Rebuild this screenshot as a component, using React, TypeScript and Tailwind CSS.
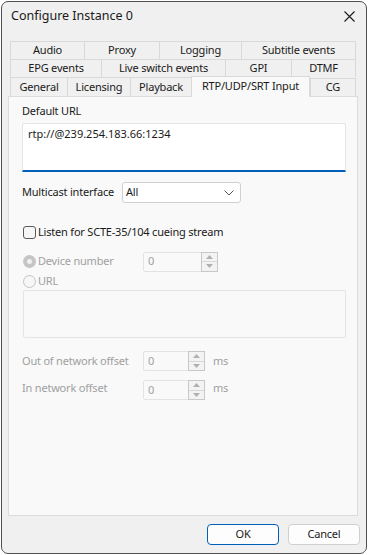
import React from "react";

const F = { fontFamily: '"Noto Sans", "Segoe UI", sans-serif', letterSpacing: "-0.2px" };

function Tab({ w, label, last }: { w: number; label: string; last?: boolean }) {
  return (
    <div
      className={`h-full flex items-center justify-center border-t border-l border-[#d9d9d9] bg-[#f0f0f0] text-[11px] text-[#1a1a1a] ${last ? "border-r" : ""}`}
      style={{ width: w }}
    >
      {label}
    </div>
  );
}

function Spin({ w }: { w: number }) {
  return (
    <div
      className="h-[20px] flex border border-[#e3e3e3] bg-[#f9f9f9] rounded-[2px]"
      style={{ width: w }}
    >
      <div className="flex-1 flex items-center pl-[4px] text-[11px] text-[#a0a0a0]">0</div>
      <div className="w-[17px] flex flex-col bg-[#f3f3f3] border border-[#c8c8c8] -my-px -mr-px">
        <div className="flex-1 flex items-center justify-center border-b border-[#d8d8d8]">
          <svg width="7" height="4" viewBox="0 0 7 4"><path d="M0 4 L3.5 0 L7 4Z" fill="#b0b0b0" /></svg>
        </div>
        <div className="flex-1 flex items-center justify-center">
          <svg width="7" height="4" viewBox="0 0 7 4"><path d="M0 0 L3.5 4 L7 0Z" fill="#b0b0b0" /></svg>
        </div>
      </div>
    </div>
  );
}

export default function App() {
  return (
    <div className="w-[368px] h-[555px] bg-white" style={F}>
      <div className="ml-[1px] pt-[1px]">
        <div className="w-[366px] h-[553px] border border-[#505050] rounded-[7px] bg-[#f0f0f0] flex flex-col overflow-hidden">
          {/* Title bar */}
          <div className="h-[28px] flex items-center justify-between pl-[9px] pr-[11px]">
            <span className="text-[12.5px] text-[#1a1a1a] tracking-normal">Configure Instance 0</span>
            <svg width="11" height="11" viewBox="0 0 11 11">
              <path d="M0.5 0.5 L10.5 10.5 M10.5 0.5 L0.5 10.5" stroke="#1a1a1a" strokeWidth="1.1" />
            </svg>
          </div>
          {/* Tabs */}
          <div className="mt-[11px] pl-[8px] flex flex-col">
            <div className="h-[18px] flex">
              <Tab w={74} label="Audio" />
              <Tab w={75} label="Proxy" />
              <Tab w={82} label="Logging" />
              <Tab w={115} label="Subtitle events" last />
            </div>
            <div className="h-[18px] flex">
              <Tab w={91} label="EPG events" />
              <Tab w={124} label="Live switch events" />
              <Tab w={66} label="GPI" />
              <Tab w={65} label="DTMF" last />
            </div>
            <div className="h-[19px] flex items-end">
              <div className="h-[19px] flex">
                <Tab w={57} label="General" />
                <Tab w={63} label="Licensing" />
                <Tab w={61} label="Playback" />
              </div>
              <div className="relative z-10 h-[21px] w-[119px] -mb-[1px] flex items-start justify-center pt-[1px] border-t border-l border-r border-[#d9d9d9] bg-[#f9f9f9] text-[11px] text-[#1a1a1a]">
                RTP/UDP/SRT Input
              </div>
              <div className="h-[18px] flex">
                <Tab w={46} label="CG" last />
              </div>
            </div>
          </div>
          {/* Panel */}
          <div className="ml-[6px] w-[350px] h-[420px] border border-[#dcdcdc] bg-[#f9f9f9] flex flex-col pl-[13px] text-[11px]">
            <div className="mt-[6px] h-[16px] leading-[16px] text-[#1a1a1a]">Default URL</div>
            <div className="mt-[4px] w-[324px] h-[49px] bg-white border border-[#e5e5e5] border-b-2 border-b-[#005fb8] rounded-t-[3px] pl-[5px] pt-[2px] text-[#1a1a1a] tracking-normal">
              rtp://@239.254.183.66:1234
            </div>
            <div className="mt-[10px] h-[21px] flex items-center">
              <span className="w-[100px] text-[#1a1a1a] whitespace-nowrap">Multicast interface</span>
              <div className="w-[119px] h-[21px] flex items-center justify-between bg-white border border-[#d0d0d0] rounded-[3px] pl-[3px] pr-[6px] text-[#1a1a1a]">
                <span>All</span>
                <svg width="10" height="6" viewBox="0 0 10 6"><path d="M0.5 0.5 L5 5 L9.5 0.5" stroke="#555" strokeWidth="1" fill="none" /></svg>
              </div>
            </div>
            <div className="mt-[21px] h-[16px] flex items-center">
              <div className="w-[13px] h-[13px] ml-[1px] border border-[#5a5a5a] rounded-[3px] bg-[#f6f6f6]" />
              <span className="ml-[2px] text-[#1a1a1a]">Listen for SCTE-35/104 cueing stream</span>
            </div>
            <div className="mt-[11px] h-[21px] flex items-center">
              <div className="w-[121px] flex items-center">
                <div className="w-[13px] h-[13px] ml-[1px] rounded-full bg-[#c5c5c5] flex items-center justify-center">
                  <div className="w-[5px] h-[5px] rounded-full bg-[#f0f0f0]" />
                </div>
                <span className="ml-[2px] text-[#a0a0a0]">Device number</span>
              </div>
              <Spin w={75} />
            </div>
            <div className="h-[18px] flex items-center">
              <div className="w-[13px] h-[13px] ml-[1px] rounded-full border border-[#c5c5c5] bg-[#f6f6f6]" />
              <span className="ml-[2px] text-[#a0a0a0]">URL</span>
            </div>
            <div className="ml-[1px] w-[323px] h-[48px] border border-[#e5e5e5] bg-[#f9f9f9] rounded-[2px]" />
            <div className="mt-[13px] h-[20px] flex items-center">
              <span className="w-[121px] text-[#a0a0a0]">Out of network offset</span>
              <Spin w={62} />
              <span className="ml-[8px] text-[#a0a0a0]">ms</span>
            </div>
            <div className="mt-[9px] h-[20px] flex items-center">
              <span className="w-[121px] text-[#a0a0a0] -mt-[3px]">In network offset</span>
              <Spin w={62} />
              <span className="ml-[8px] text-[#a0a0a0] -mt-[3px]">ms</span>
            </div>
          </div>
          {/* Buttons */}
          <div className="mt-[8px] flex justify-end gap-[9px] pr-[6px]">
            <div className="w-[72px] h-[21px] flex items-center justify-center bg-[#fdfdfd] border border-[#005fb8] rounded-[4px] text-[11px] text-[#1a1a1a]">OK</div>
            <div className="w-[72px] h-[21px] flex items-center justify-center bg-[#fdfdfd] border border-[#d0d0d0] rounded-[4px] text-[11px] text-[#1a1a1a]">Cancel</div>
          </div>
        </div>
      </div>
    </div>
  );
}
